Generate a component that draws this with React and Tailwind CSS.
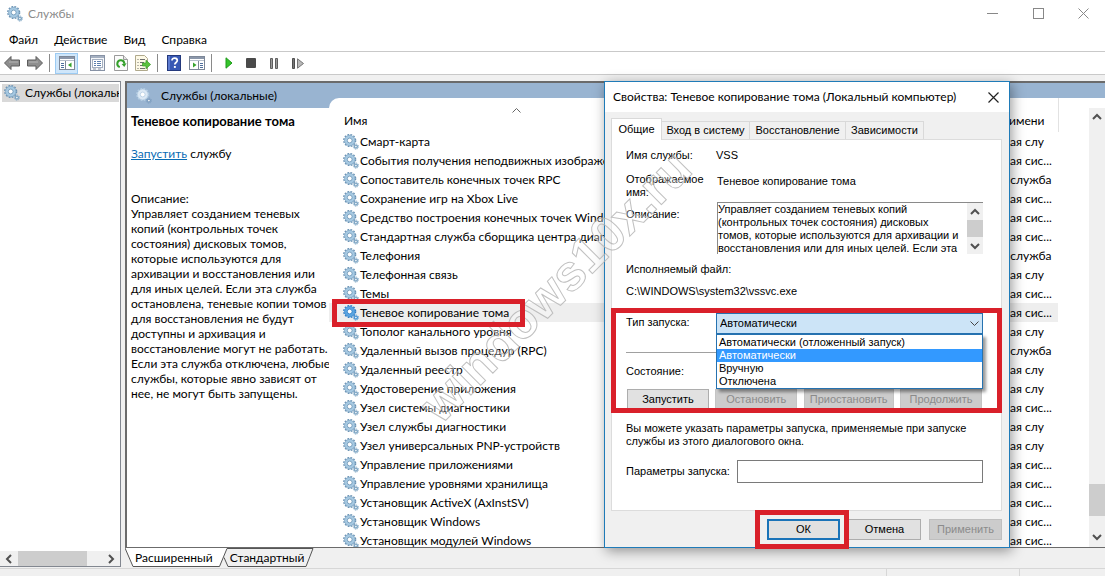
import React from "react";

const services = [
  ["Смарт-карта", "Локальная слу"],
  ["События получения неподвижных изображений", "Локальная сис..."],
  ["Сопоставитель конечных точек RPC", "Сетевая служба"],
  ["Сохранение игр на Xbox Live", "Локальная сис..."],
  ["Средство построения конечных точек Windows Audio", "Локальная сис..."],
  ["Стандартная служба сборщика центра диагностики", "Локальная сис..."],
  ["Телефония", "Сетевая служба"],
  ["Телефонная связь", "Локальная слу"],
  ["Темы", "Локальная сис..."],
  ["Теневое копирование тома", "Локальная сис..."],
  ["Тополог канального уровня", "Локальная слу"],
  ["Удаленный вызов процедур (RPC)", "Сетевая служба"],
  ["Удаленный реестр", "Локальная слу"],
  ["Удостоверение приложения", "Локальная слу"],
  ["Узел системы диагностики", "Локальная сис..."],
  ["Узел службы диагностики", "Локальная слу"],
  ["Узел универсальных PNP-устройств", "Локальная слу"],
  ["Управление приложениями", "Локальная сис..."],
  ["Управление уровнями хранилища", "Локальная сис..."],
  ["Установщик ActiveX (AxInstSV)", "Локальная сис..."],
  ["Установщик Windows", "Локальная сис..."],
  ["Установщик модулей Windows", "Локальная сис..."],
];
const selectedService = "Теневое копирование тома";

const description =
  "Управляет созданием теневых\nкопий (контрольных точек\nсостояния) дисковых томов,\nкоторые используются для\nархивации и восстановления или\nдля иных целей. Если эта служба\nостановлена, теневые копии томов\nдля восстановления не будут\nдоступны и архивация и\nвосстановление могут не работать.\nЕсли эта служба отключена, любые\nслужбы, которые явно зависят от\nнее, не могут быть запущены.";

const startupTypes = ["Автоматически (отложенный запуск)", "Автоматически", "Вручную", "Отключена"];

function Gears({ tone = "normal" }) {
  const palettes = {
    normal: { edge: "#6b93b4", body: "#a6c9e2", small: "#7fa6c4" },
    active: { edge: "#2f7cc4", body: "#5aa5e2", small: "#4a94d4" },
    header: { edge: "#b4cde3", body: "#dbe8f4", small: "#7f9fc0" },
  };
  const p = palettes[tone];
  return (
    <svg width="16" height="16" viewBox="0 0 16 16" className="shrink-0" aria-hidden="true">
      <circle cx="6.700" cy="6.500" r="5.900" fill="none" stroke={p.edge} strokeWidth="1.400" strokeDasharray="1.800 1.290" />
      <circle cx="6.700" cy="6.500" r="3.900" fill="#fff" stroke={p.body} strokeWidth="3" />
      <circle cx="6.700" cy="6.500" r="5.200" fill="none" stroke={p.edge} strokeWidth="0.500" />
      <circle cx="6.700" cy="6.500" r="2.400" fill="none" stroke={p.edge} strokeWidth="0.800" />
      <circle cx="12.900" cy="12.600" r="2.600" fill="none" stroke={p.small} strokeWidth="1" strokeDasharray="1.040 1" />
      <circle cx="12.900" cy="12.600" r="1.500" fill="#fff" stroke={p.small} strokeWidth="1.400" />
    </svg>
  );
}

function Chevron({ dir = "down", className = "" }) {
  const d = { down: "M1 3l4 4 4-4", up: "M1 7l4-4 4 4", left: "M7 1L3 5l4 4", right: "M3 1l4 4-4 4" }[dir];
  return (
    <svg width="10" height="10" viewBox="0 0 10 10" className={className} aria-hidden="true">
      <path d={d} fill="none" stroke="currentColor" strokeWidth="2" />
    </svg>
  );
}

function Arrow({ flip }) {
  return (
    <svg width="16" height="16" viewBox="0 0 16 16" aria-hidden="true">
      <path
        d={flip ? "M15.500 8L9 1.500V5H.5v6H9v3.500z" : "M.5 8L7 1.500V5h8.500v6H7v3.500z"}
        fill="#8e8e8e"
        stroke="#5c5c5c"
      />
      <path d={flip ? "M2 7h9" : "M5 7h9"} stroke="#b5b5b5" />
    </svg>
  );
}

function PaneIcon({ flip }) {
  return (
    <svg width="16" height="14" viewBox="0 0 16 14" aria-hidden="true">
      <rect x=".5" y=".5" width="15" height="13" fill="#fff" stroke="#7d8797" />
      <path d="M1 2h14" stroke="#8b97aa" strokeWidth="2" />
      <path d="M1 4.500h14" stroke="#b8c0cc" />
      <path d={flip ? "M9.500 5v8" : "M6.500 5v8"} stroke="#7d8797" />
      <path d={flip ? "M11 7.500h3M11 9.500h3M11 11.500h3" : "M2 7.500h3M2 9.500h3M2 11.500h3"} stroke="#4f6f9c" />
      <path d={flip ? "M4 6.500v5l3.500-2.500z" : "M12.500 6.500v5L9 9z"} fill="#37a32c" />
    </svg>
  );
}

function Separator() {
  return <span className="h-[18px] w-px bg-[#8a8a8a]" />;
}

function Toolbar() {
  const tool = "flex h-[21px] items-center justify-center";
  return (
    <div className="flex h-[24px] shrink-0 items-center border-t border-b border-[#c9c9c9] bg-white">
      <button aria-label="Назад" className={`${tool} ml-1 w-4`}><Arrow /></button>
      <button aria-label="Вперед" className={`${tool} ml-[7px] w-4`}><Arrow flip /></button>
      <span className="w-[6px]" />
      <Separator />
      <button aria-label="Дерево консоли" className={`${tool} ml-[5px] w-[23px] border border-[#9ccbf3] bg-[#cfe6fa]`}><PaneIcon /></button>
      <button aria-label="Свойства" className={`${tool} ml-[11px] w-4`}>
        <svg width="15" height="16" viewBox="0 0 15 16" aria-hidden="true">
          <rect x=".5" y=".5" width="14" height="15" fill="#f4f6f9" stroke="#8792a5" />
          <path d="M1 2h13" stroke="#a5b0c1" strokeWidth="2" />
          <rect x="2.500" y="4.500" width="10" height="8" fill="#fff" stroke="#a5b0c1" />
          <path d="M4 6.500h2M7 6.500h4M4 8.500h2M7 8.500h4M4 10.500h2M7 10.500h4" stroke="#5c7fae" />
          <path d="M3 14h3M8 14h3" stroke="#8792a5" />
        </svg>
      </button>
      <button aria-label="Обновить" className={`${tool} ml-2 w-4`}>
        <svg width="14" height="16" viewBox="0 0 14 16" aria-hidden="true">
          <path d="M.5.5h9l4 4v11H.5z" fill="#fbfbfb" stroke="#9a9a9a" />
          <path d="M9.500.5v4h4" fill="#e4e4e4" stroke="#9a9a9a" />
          <path d="M5.800 12.100A3.500 3.500 0 1 1 10.300 8.800" fill="none" stroke="#35a02b" strokeWidth="2" />
          <path d="M12.600 8.200L10.300 12 7.600 8.900z" fill="#35a02b" />
        </svg>
      </button>
      <button aria-label="Экспорт списка" className={`${tool} ml-[6px] w-4`}>
        <svg width="16" height="16" viewBox="0 0 16 16" aria-hidden="true">
          <path d="M.5.5h9l3 3v12H.5z" fill="#fdf9e6" stroke="#b0a98c" />
          <path d="M2.500 4.500h1M5 4.500h5M2.500 7.500h1M5 7.500h4M2.500 10.500h1M5 10.500h4M2.500 13.500h1M5 13.500h5" stroke="#6f6f6f" />
          <path d="M7.500 8H11V5.200L15.600 9.500 11 13.800V11H7.500z" fill="#5cc23e" stroke="#3a9b28" strokeWidth=".7" />
        </svg>
      </button>
      <span className="w-[6px]" />
      <Separator />
      <button aria-label="Справка" className={`${tool} ml-2 w-4`}>
        <svg width="14" height="16" viewBox="0 0 14 16" aria-hidden="true">
          <rect x=".5" y=".5" width="13" height="15" fill="#3758b4" stroke="#24397c" />
          <path d="M1 1h2v14H1z" fill="#5d7bd0" />
          <path d="M5 5.600c0-3.400 5.300-3.200 5.300 0 0 2-2.500 1.900-2.500 4" fill="none" stroke="#fff" strokeWidth="1.700" />
          <rect x="6.900" y="11" width="1.900" height="1.900" fill="#fff" />
        </svg>
      </button>
      <button aria-label="Панель действий" className={`${tool} ml-[7px] w-4`}><PaneIcon flip /></button>
      <span className="w-[6px]" />
      <Separator />
      <button aria-label="Запустить службу" className={`${tool} ml-[9px] w-4`}>
        <svg width="8" height="12" viewBox="0 0 8 12" aria-hidden="true"><path d="M1 .8v10.400L7 6z" fill="#35c52b" stroke="#1f9a1b" /></svg>
      </button>
      <button aria-label="Остановить службу" className={`${tool} ml-[6px] w-4`}>
        <svg width="10" height="10" viewBox="0 0 10 10" aria-hidden="true"><rect width="10" height="10" rx="1" fill="#4a4a4a" /></svg>
      </button>
      <button aria-label="Приостановить службу" className={`${tool} ml-[7px] w-4`}>
        <svg width="8" height="11" viewBox="0 0 8 11" aria-hidden="true"><path d="M.5.5h2v10h-2zM5.500.5h2v10h-2z" fill="#9a9a9a" stroke="#5f5f5f" /></svg>
      </button>
      <button aria-label="Перезапустить службу" className={`${tool} ml-2 w-4`}>
        <svg width="12" height="11" viewBox="0 0 12 11" aria-hidden="true"><path d="M.5.5h2v10h-2z" fill="#777" stroke="#4f4f4f" /><path d="M5.500.8v9.400l6-4.700z" fill="#b9b9b9" stroke="#777" /></svg>
      </button>
    </div>
  );
}

function TitleBar() {
  return (
    <header className="flex h-[27px] shrink-0 items-center bg-white pl-[7px] text-[#8b8b8b]">
      <Gears />
      <h1 className="ml-[5px] flex-1 text-[12px]">Службы</h1>
      <button aria-label="Свернуть" className="flex w-[46px] justify-center">
        <svg width="11" height="11" viewBox="0 0 11 11"><path d="M0 5.500h11" stroke="#888" /></svg>
      </button>
      <button aria-label="Развернуть" className="flex w-[46px] justify-center">
        <svg width="11" height="11" viewBox="0 0 11 11"><rect x=".5" y=".5" width="10" height="10" fill="none" stroke="#888" /></svg>
      </button>
      <button aria-label="Закрыть" className="flex w-[44px] justify-center">
        <svg width="11" height="11" viewBox="0 0 11 11"><path d="M.5.5l10 10M10.500.5l-10 10" stroke="#888" /></svg>
      </button>
    </header>
  );
}

function TreePane() {
  return (
    <nav className="flex w-[121px] shrink-0 flex-col border-t border-r border-b border-[#828790] bg-white">
      <div className="flex-1 overflow-hidden pt-[2px] pl-[2px]">
        <a href="#local" className="mr-px flex h-[18px] items-center gap-[5px] overflow-hidden bg-[#d9d9d9] pl-[2px] whitespace-nowrap">
          <Gears />
          <span>Службы (локальные)</span>
        </a>
      </div>
      <div className="flex h-[15px] items-center bg-[#f0f0f0] px-1 text-[#505050]">
        <Chevron dir="left" />
        <span className="ml-1 h-full w-[69px] bg-[#cdcdcd]" />
        <Chevron dir="right" className="ml-auto" />
      </div>
    </nav>
  );
}

function Details() {
  return (
    <section className="w-[202px] shrink-0 pl-1 whitespace-nowrap">
      <h2 className="mt-1 text-[13px] leading-[18px] font-bold">Теневое копирование тома</h2>
      <p className="mt-[15px] leading-[18px]">
        <a href="#start" className="text-[#0a6cb4] underline">Запустить</a> службу
      </p>
      <p className="mt-[28px] leading-[15px]">Описание:</p>
      <p className="leading-[15px] whitespace-pre">{description}</p>
    </section>
  );
}

function ServiceTable() {
  return (
    <section className="-mt-[10px] flex min-w-0 flex-1 overflow-hidden rounded-tl-[10px] bg-white">
      <div className="min-w-0 flex-1">
        <table className="w-full table-fixed border-collapse">
          <colgroup>
            <col />
            <col className="w-[95px]" />
            <col className="w-[31px]" />
          </colgroup>
          <thead>
            <tr className="h-[34px]">
              <th scope="col" className="relative pt-[11px] pl-[15px] text-left align-middle font-normal">
                Имя
                <svg width="9" height="5" viewBox="0 0 9 5" className="absolute top-[10px] left-[183px]" aria-hidden="true">
                  <path d="M.5 4.500l4-4 4 4" fill="none" stroke="#666" />
                </svg>
              </th>
              <th scope="col" className="border-r border-[#e2e2e2] pt-[11px] text-left font-normal whitespace-nowrap">Вход от имени</th>
              <td />
            </tr>
          </thead>
          <tbody>
            {services.map(([name, account]) => {
              const active = name === selectedService;
              return (
                <tr key={name} className="h-[19px]">
                  <td className={`h-[19px] p-0 pl-[14px] ${active ? "bg-[#eeeeee]" : ""}`}>
                    <div className="relative flex h-[19px] items-center gap-px whitespace-nowrap">
                      <Gears tone={active ? "active" : "normal"} />
                      <span>{name}</span>
                      {active && <span className="absolute -top-[4px] -left-[11px] z-20 h-[28px] w-[193px] border-[5px] border-[#d9202a]" />}
                    </div>
                  </td>
                  <td className={`h-[19px] p-0 whitespace-nowrap ${active ? "bg-[#eeeeee]" : ""}`}>{account}</td>
                  <td className="p-0" />
                </tr>
              );
            })}
          </tbody>
        </table>
      </div>
      <div className="mt-[10px] flex w-[16px] shrink-0 flex-col items-center bg-[#f0f0f0] text-[#505050]">
        <Chevron dir="up" className="mt-1" />
        <span className="mt-auto mb-[16px] h-[32px] w-full bg-[#cdcdcd]" />
        <Chevron dir="down" className="mb-[5px]" />
      </div>
    </section>
  );
}

function ViewTabs() {
  return (
    <div className="relative flex h-[19px] shrink-0 items-center pl-[10px] leading-[18px]">
      <svg width="190" height="19" viewBox="0 0 190 19" className="absolute top-0 left-0" aria-hidden="true">
        <path d="M0 0l8 18.500h86L102.500 0z" fill="#fff" />
        <path d="M0 0l8 18.500h86.500L102 .5h86l-7 18H103l-4-9" fill="none" stroke="#555" />
      </svg>
      <button className="relative">Расширенный</button>
      <button className="relative ml-[17px]">Стандартный</button>
    </div>
  );
}

const dialogButton = "flex h-[21px] w-[73px] items-center justify-center border";

function PropertiesDialog() {
  return (
    <div
      role="dialog"
      aria-labelledby="dialog-title"
      className="absolute top-[81px] left-[604px] w-[406px] border border-[#1f7bb8] bg-[#f0f0f0] shadow-[2px_3px_12px_rgba(0,0,0,0.4)]"
    >
      <div className="flex h-[30px] items-center bg-white pl-2">
        <h2 id="dialog-title" className="flex-1 whitespace-nowrap">Свойства: Теневое копирование тома (Локальный компьютер)</h2>
        <button aria-label="Закрыть" className="mr-[10px]">
          <svg width="11" height="11" viewBox="0 0 11 11"><path d="M.5.5l10 10M10.500.5l-10 10" stroke="#222" strokeWidth="1.200" /></svg>
        </button>
      </div>

      <div className="pt-[6px] pr-[7px] pl-[6px] font-['Liberation_Sans',sans-serif] text-[11px] leading-[13px]">
        <div role="tablist" className="flex items-end whitespace-nowrap">
          <button role="tab" aria-selected="true" className="relative z-10 -mb-px flex h-[22px] w-[51px] items-center justify-center border border-b-0 border-[#d9d9d9] bg-white">Общие</button>
          <button role="tab" className="flex h-[18px] w-[88px] items-center justify-center border-t border-r border-[#d9d9d9]">Вход в систему</button>
          <button role="tab" className="flex h-[18px] w-[96px] items-center justify-center border-t border-r border-[#d9d9d9]">Восстановление</button>
          <button role="tab" className="flex h-[18px] w-[78px] items-center justify-center border-t border-r border-[#d9d9d9]">Зависимости</button>
        </div>

        <div className="relative border border-[#dcdcdc] bg-white pr-[18px] pb-[27px] pl-[14px]">
          <dl className="grid grid-cols-[90px_1fr] pt-[9px]">
            <dt>Имя службы:</dt>
            <dd>VSS</dd>
            <dt className="mt-[11px]">Отображаемое<br />имя:</dt>
            <dd className="mt-[13px] pl-px">Теневое копирование тома</dd>
          </dl>
          <div className="mt-[3px] grid grid-cols-[91px_1fr]">
            <label htmlFor="desc" className="mt-[6px]">Описание:</label>
            <div className="flex h-[52px] border-t border-l border-[#8a8a8a]">
              <textarea
                id="desc"
                readOnly
                className="h-full min-w-0 flex-1 resize-none overflow-hidden bg-white whitespace-pre outline-none"
                value={"Управляет созданием теневых копий\n(контрольных точек состояния) дисковых\nтомов, которые используются для архивации и\nвосстановления или для иных целей. Если эта"}
              />
              <div className="flex w-[16px] flex-col items-center bg-[#f0f0f0] text-[#505050]">
                <Chevron dir="up" className="mt-1" />
                <span className="mt-[3px] h-[17px] w-full bg-[#cdcdcd]" />
                <Chevron dir="down" className="mt-1" />
              </div>
            </div>
          </div>
          <p className="mt-[9px]">Исполняемый файл:</p>
          <p className="mt-[9px]">C:\WINDOWS\system32\vssvc.exe</p>

          <div className="mt-[15px] grid grid-cols-[90px_1fr]">
            <label htmlFor="startup" className="mt-[3px]">Тип запуска:</label>
            <div className="relative">
              <select id="startup" defaultValue="Автоматически" className="block h-[21px] w-full appearance-none border border-[#2672b0] bg-[#cce4f7] pl-[3px] outline-none">
                {startupTypes.map((t) => <option key={t}>{t}</option>)}
              </select>
              <svg width="9" height="5" viewBox="0 0 9 5" className="absolute top-2 right-[4px]" aria-hidden="true">
                <path d="M.5.5l4 4 4-4" fill="none" stroke="#444" />
              </svg>
              <ul role="listbox" className="absolute top-[21px] left-0 z-10 w-full border border-[#2672b0] bg-white pt-px shadow-[3px_3px_3px_rgba(0,0,0,0.4)]">
                {startupTypes.map((t) => (
                  <li key={t} role="option" aria-selected={t === "Автоматически"} className={t === "Автоматически" ? "bg-[#3399ff] pl-[2px] text-white" : "pl-[2px]"}>{t}</li>
                ))}
              </ul>
            </div>
          </div>
          <hr className="mt-[18px] border-[#a0a0a0]" />
          <p className="mt-[12px]">Состояние:</p>
          <div className="mt-[11px] flex justify-between px-px text-[#8b8b8b]">
            <button className="h-[21px] w-[82px] border border-[#adadad] bg-[#e1e1e1] text-black">Запустить</button>
            <button disabled className="h-[21px] w-[82px] border border-[#c4c4c4] bg-[#cccccc]">Остановить</button>
            <button disabled className="h-[21px] w-[90px] border border-[#c4c4c4] bg-[#cccccc]">Приостановить</button>
            <button disabled className="h-[21px] w-[82px] border border-[#c4c4c4] bg-[#cccccc]">Продолжить</button>
          </div>
          <p className="mt-[12px] whitespace-nowrap">
            Вы можете указать параметры запуска, применяемые при запуске<br />службы из этого диалогового окна.
          </p>
          <div className="mt-[12px] flex items-center">
            <label htmlFor="params" className="w-[111px]">Параметры запуска:</label>
            <input id="params" type="text" className="h-[23px] min-w-0 flex-1 border border-[#7a7a7a] bg-white px-1" />
          </div>
          <span className="pointer-events-none absolute top-[168px] -right-px -left-px z-20 h-[105px] border-[5px] border-[#d9202a]" />
        </div>

        <div className="flex justify-end gap-2 pt-[8px] pb-[7px]">
          <div className="relative">
            <button className={`${dialogButton} border-2 border-[#1a73b8] bg-[#e1e1e1]`}>ОК</button>
            <span className="pointer-events-none absolute -top-[9px] -left-[12px] h-[39px] w-[94px] border-[5px] border-[#d9202a]" />
          </div>
          <button className={`${dialogButton} border-[#adadad] bg-[#e1e1e1]`}>Отмена</button>
          <button disabled className={`${dialogButton} border-[#bfbfbf] bg-[#cccccc] text-[#8b8b8b]`}>Применить</button>
        </div>
      </div>
    </div>
  );
}

export default function App() {
  return (
    <div className="relative flex h-screen flex-col overflow-hidden bg-[#f0f0f0] font-['Lato','Open_Sans',sans-serif] text-[12px] leading-[16px] text-black">
      <TitleBar />
      <nav className="flex h-[24px] shrink-0 items-center gap-4 bg-white pt-[2px] pl-[9px]">
        <button>Файл</button>
        <button>Действие</button>
        <button>Вид</button>
        <button>Справка</button>
      </nav>
      <Toolbar />

      <main className="mt-[6px] flex min-h-0 flex-1">
        <TreePane />
        <div className="ml-1 flex min-w-0 flex-1 flex-col">
          <div className="flex min-h-0 flex-1 flex-col border-t-2 border-b border-l-2 border-[#6b6b6b] bg-white">
            <div className="flex h-[25px] shrink-0 items-center gap-[9px] bg-[#99b4d1] pl-[9px]">
              <Gears tone="header" />
              <span>Службы (локальные)</span>
            </div>
            <div className="flex min-h-0 flex-1">
              <Details />
              <ServiceTable />
            </div>
          </div>
          <ViewTabs />
        </div>
      </main>
      <footer className="mt-px flex h-[8px] shrink-0 border-t border-[#d7d7d7]">
        <span className="flex-1 border-r border-[#d7d7d7]" />
        <span className="w-[133px] border-r border-[#d7d7d7]" />
        <span className="w-[85px]" />
      </footer>

      <PropertiesDialog />

      <svg width="320" height="320" viewBox="0 0 320 320" className="pointer-events-none absolute top-[130px] left-[400px] z-10" aria-hidden="true">
        <text transform="translate(41 295) rotate(-45)" fontSize="50" fontWeight="bold" fontFamily="Liberation Sans, sans-serif" fill="#ffffff" fillOpacity="0.3" stroke="#b0b0b0" strokeOpacity="0.8">
          windows10x.ru
        </text>
      </svg>
    </div>
  );
}
